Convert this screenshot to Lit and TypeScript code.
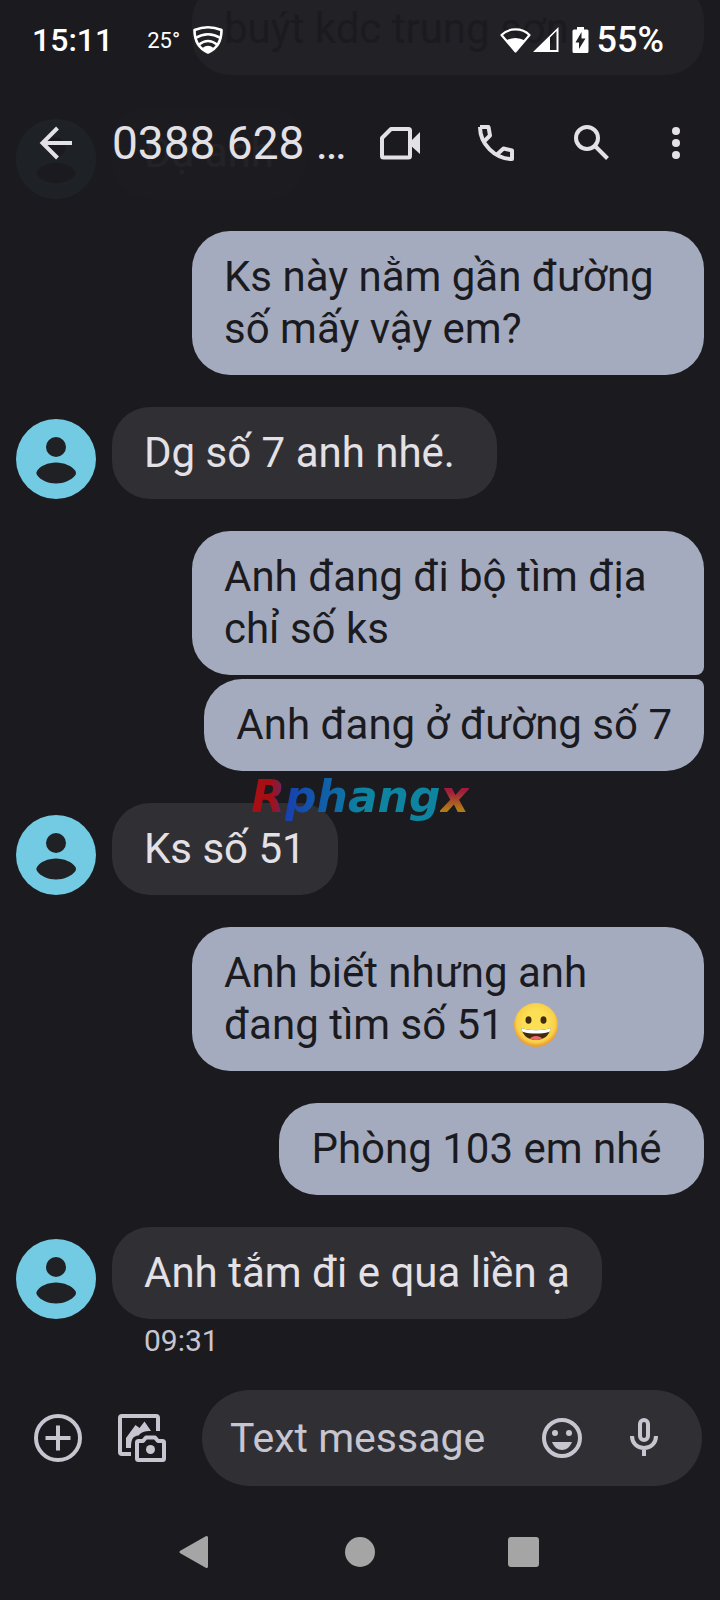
import { LitElement, html, svg, css, nothing } from "lit";
import { customElement, property } from "lit/decorators.js";

type Message = {
  from: "me" | "them";
  text: string;
  emoji?: boolean;
  joinNext?: boolean;
  joinPrev?: boolean;
  wide?: boolean;
  time?: string;
};

const messages: Message[] = [
  { from: "me", text: "buýt kdc trung sơn", wide: true },
  { from: "them", text: "Dạ anh" },
  { from: "me", text: "Ks này nằm gần đường số mấy vậy em?" },
  { from: "them", text: "Dg số 7 anh nhé.\u00a0" },
  { from: "me", text: "Anh đang đi bộ tìm địa chỉ số ks", joinNext: true },
  { from: "me", text: "Anh đang ở đường số 7", joinPrev: true },
  { from: "them", text: "Ks số 51" },
  { from: "me", text: "Anh biết nhưng anh đang tìm số 51 ", emoji: true },
  { from: "me", text: "Phòng 103 em nhé\u00a0" },
  { from: "them", text: "Anh tắm đi e qua liền ạ", time: "09:31" },
];

const grin = html`<svg class="emoji" viewBox="0 0 44 44" role="img" aria-label="Grinning face">
  <defs>
    <radialGradient id="face" cx="50%" cy="45%" r="52%">
      <stop offset="0.5" stop-color="#fbe055" />
      <stop offset="0.85" stop-color="#f9d04a" />
      <stop offset="1" stop-color="#efa030" />
    </radialGradient>
  </defs>
  <circle cx="22" cy="22" r="22" fill="url(#face)" />
  <ellipse cx="14.5" cy="17" rx="3" ry="3.8" fill="#422b0d" />
  <ellipse cx="29.5" cy="17" rx="3" ry="3.8" fill="#422b0d" />
  <path d="M7.500 25C16 28 28 28 36.500 25C36 32 30 37 22 37S8 32 7.500 25z" fill="#422b0d" />
  <path d="M7.500 25C16 28 28 28 36.500 25C36.500 27 36 28.500 35 29C27 31 17 31 9 29C8 28.500 7.500 27 7.500 25z" fill="#fff" />
  <path d="M16 35.500C18 32 26 32 28 35.500C24 37.500 20 37.500 16 35.500z" fill="#ee6a6a" />
</svg>`;

const icons = {
  shield: svg`<g fill="none" stroke="currentColor" stroke-width="2.6">
    <path stroke-linejoin="round" d="M2.500 6Q16 .5 29.500 6C29.500 18 24 25 16 28.500C8 25 2.500 18 2.500 6z"/>
    <path d="M3.500 14Q16 6.500 28.500 14M7 20.500Q16 13.500 25 20.500"/></g>
    <path fill="currentColor" d="M10.500 24Q16 19.500 21.500 24L16 29z"/>`,
  wifi: svg`<path fill="none" stroke="currentColor" stroke-width="2.2" stroke-linejoin="round" d="M2.500 9C10 1.500 23 1.500 30.500 9L16.500 25.500z"/>
    <path fill="currentColor" d="M7 14.500Q16.500 9.500 26 14.500L16.500 26z"/>`,
  signal: svg`<path fill="currentColor" fill-rule="evenodd" d="M0 26L25.500 1V26zM17 11.500V24H23.500V5z"/>`,
  battery: svg`<path fill="currentColor" fill-rule="evenodd" d="M5 1H12V3.500H15Q16.500 3.500 16.500 5V25.500Q16.500 27 15 27H2Q.5 27 .5 25.500V5Q.5 3.500 2 3.500H5zM9.500 6L3.500 16.500H7V23L13.500 12.500H9.500z"/>`,
  back: svg`<path fill="none" stroke="currentColor" stroke-width="4" d="M40 24H11M25.500 9L10.500 24L25.500 39"/>`,
  video: svg`<path fill="none" stroke="currentColor" stroke-width="4" stroke-linejoin="round" d="M15 10H32.500Q34 10 34 11.500V37Q34 38.500 32.500 38.500H7.500Q6 38.500 6 37V19z"/>
    <path fill="currentColor" d="M34 23L44 13V35L34 26z"/>`,
  call: svg`<path fill="none" stroke="currentColor" stroke-width="4" stroke-linejoin="round" d="M8 8H16.500L18 16.500L12.500 22M8 8C8 25 23 40 40 40V31.500L31.500 29.500L25.500 35"/>`,
  search: svg`<g fill="none" stroke="currentColor" stroke-width="4"><circle cx="19" cy="19" r="11"/><path d="M27 27L39.500 39.500"/></g>`,
  more: svg`<g fill="currentColor"><circle cx="24" cy="12" r="4"/><circle cx="24" cy="24" r="4"/><circle cx="24" cy="36" r="4"/></g>`,
  add: svg`<g fill="none" stroke="currentColor" stroke-width="4"><circle cx="24" cy="24" r="22"/><path d="M24 11.500V36.500M11.500 24H36.500"/></g>`,
  gallery: svg`<g fill="none" stroke="currentColor" stroke-width="4">
    <path d="M40 17V4Q40 2 38 2H4Q2 2 2 4V38Q2 40 4 40H13"/>
    <path stroke-linejoin="round" d="M19 28.500Q19 27 20.500 27H25L28 23.500H37L40 27H44.500Q46 27 46 28.500V44.500Q46 46 44.500 46H20.500Q19 46 19 44.500z"/></g>
    <path fill="currentColor" d="M8 34V24L17.500 11L21.500 14L26.500 7.500L33 17C26 17 24 18 20.500 21.500C15 22 13 25 13 34z"/>
    <circle fill="currentColor" cx="32.500" cy="35.500" r="4.500"/>`,
  smile: svg`<circle cx="24" cy="24" r="18" fill="none" stroke="currentColor" stroke-width="4"/>
    <g fill="currentColor"><circle cx="17" cy="19" r="3"/><circle cx="31" cy="19" r="3"/><path d="M14 28H34C32 33 28.500 36 24 36S16 33 14 28z"/></g>`,
  mic: svg`<g fill="none" stroke="currentColor" stroke-width="4"><rect x="20" y="6" width="8" height="20" rx="4"/><path d="M12 22C12 29 17 34 24 34S36 29 36 22M24 34V42"/></g>`,
  navBack: svg`<path fill="currentColor" stroke="currentColor" stroke-width="3" stroke-linejoin="round" d="M9 24L34.500 9.500V38.500z"/>`,
  navHome: svg`<circle cx="24" cy="24" r="15" fill="currentColor"/>`,
  navRecent: svg`<rect x="8" y="9" width="31" height="30" rx="3" fill="currentColor"/>`,
};

@customElement("chat-message")
class ChatMessage extends LitElement {
  @property({ attribute: false }) message!: Message;

  static styles = css`
    :host {
      display: block;
    }
    .row {
      display: flex;
      align-items: flex-end;
      gap: 16px;
    }
    .me {
      justify-content: flex-end;
      padding-left: 176px;
    }
    .avatar {
      flex: none;
      width: 80px;
      height: 80px;
    }
    .bubble {
      margin: 0;
      padding: 20px 32px;
      border-radius: 38px;
      background: #303034;
      color: #e4e1e6;
      font-size: 42px;
      line-height: 52px;
    }
    .me .bubble {
      background: #a5abbf;
      color: #1b1b1f;
    }
    .wide {
      flex: 1;
    }
    .me .join-next {
      border-bottom-right-radius: 8px;
    }
    .me .join-prev {
      border-top-right-radius: 8px;
    }
    .time {
      display: block;
      padding-left: 128px;
      color: #c7c5d0;
      font-size: 30px;
      line-height: 44px;
    }
    .emoji {
      width: 44px;
      height: 44px;
      margin: -8px 0;
      vertical-align: 0;
    }
  `;

  render() {
    const m = this.message;
    const shape = `bubble ${m.wide ? "wide" : ""} ${m.joinNext ? "join-next" : ""} ${m.joinPrev ? "join-prev" : ""}`;
    return html`
      <div class="row ${m.from}">
        ${m.from === "them"
          ? html`<svg class="avatar" viewBox="0 0 80 80" aria-hidden="true">
              <circle cx="40" cy="40" r="40" fill="#73cae3" />
              <circle cx="40" cy="28" r="10" fill="#202124" />
              <path d="M21 52C24 47 32 43.500 40 43.500S56 47 59.500 52Q60.500 54 59.500 56C55 61.500 48 64.500 40 64.500S25 61.500 21 56Q19.500 54 21 52z" fill="#202124" />
            </svg>`
          : nothing}
        <p class=${shape}>${m.text}${m.emoji ? grin : nothing}</p>
      </div>
      ${m.time ? html`<time class="time">${m.time}</time>` : nothing}
    `;
  }
}

@customElement("app-root")
class AppRoot extends LitElement {
  static styles = css`
    :host {
      display: block;
      font-family: Roboto, "Noto Sans", sans-serif;
    }
    .screen {
      position: relative;
      display: flex;
      flex-direction: column;
      height: 100vh;
      overflow: hidden;
      background: #1b1b1f;
      color: #e4e1e6;
    }
    .top {
      position: absolute;
      inset: 0 0 auto 0;
      background: rgba(27, 27, 31, 0.96);
    }
    .status {
      display: flex;
      align-items: center;
      height: 80px;
      padding: 0 56px 0 32px;
      color: #fff;
      font-size: 36px;
      font-weight: 500;
    }
    .clock {
      font-size: 32px;
    }
    .weather {
      margin: 0 12px 0 34px;
      font-size: 22px;
      font-weight: 400;
    }
    .system {
      display: flex;
      align-items: center;
      margin-left: auto;
    }
    .shield {
      width: 32px;
      height: 32px;
    }
    .wifi {
      width: 34px;
      height: 28px;
    }
    .signal {
      width: 26px;
      height: 28px;
      margin-right: 13px;
    }
    .battery {
      width: 17px;
      height: 28px;
      margin-right: 8px;
    }
    .bar {
      display: flex;
      align-items: center;
      height: 126px;
      padding: 0 8px 0 32px;
    }
    .title {
      flex: 1;
      margin: 0 0 0 32px;
      font-size: 46px;
      font-weight: 400;
      white-space: nowrap;
    }
    button {
      display: grid;
      place-items: center;
      flex: none;
      height: 48px;
      padding: 0;
      border: 0;
      background: none;
      color: inherit;
    }
    .icon {
      display: block;
      width: 48px;
      height: 48px;
    }
    .w48 {
      width: 48px;
    }
    .w72 {
      width: 72px;
    }
    .w80 {
      width: 80px;
    }
    .w84 {
      width: 84px;
    }
    .w96 {
      width: 96px;
    }
    .w164 {
      width: 164px;
    }
    .messages {
      flex: 1;
      min-height: 0;
      display: flex;
      flex-direction: column;
      justify-content: flex-end;
      gap: 32px;
      padding: 0 16px 11px;
      overflow: hidden;
    }
    .message {
      flex: none;
    }
    .joined {
      margin-top: -28px;
    }
    .composer {
      display: flex;
      align-items: center;
      gap: 36px;
      padding: 16px 18px 18px 34px;
      color: #c7c5d0;
    }
    .field {
      flex: 1;
      min-width: 0;
      display: flex;
      align-items: center;
      height: 96px;
      padding: 0 16px 0 28px;
      border-radius: 48px;
      background: #303034;
    }
    .input {
      flex: 1;
      min-width: 0;
      padding: 0;
      border: 0;
      outline: 0;
      background: none;
      color: #e4e1e6;
      font: inherit;
      font-size: 41px;
    }
    .input::placeholder {
      color: #c7c5d0;
      opacity: 1;
    }
    .nav {
      display: flex;
      align-items: center;
      justify-content: center;
      height: 96px;
      color: #a5a5a5;
    }
    .watermark {
      position: absolute;
      inset: 0;
      display: flex;
      align-items: center;
      justify-content: center;
      padding-bottom: 8px;
      pointer-events: none;
      font: italic 700 44px "DejaVu Sans", sans-serif;
    }
    .ink {
      color: transparent;
      background-clip: text;
      -webkit-background-clip: text;
    }
    .ink-r {
      background-image: linear-gradient(90deg, #a80f14 60%, #5a2a70);
    }
    .ink-phang {
      background-image: linear-gradient(90deg, #183fae, #0f62a8 28%, #0e84a0 50%);
    }
    .ink-x {
      background-image: linear-gradient(180deg, #a01c3c 40%, #b07a18 75%);
    }
  `;

  private button(name: keyof typeof icons, label: string, width: string) {
    return html`<button class=${width} type="button" aria-label=${label}>
      <svg class="icon" viewBox="0 0 48 48">${icons[name]}</svg>
    </button>`;
  }

  render() {
    return html`
      <div class="screen">
        <main class="messages">
          ${messages.map((m) => html`<chat-message class="message ${m.joinPrev ? "joined" : ""}" .message=${m}></chat-message>`)}
        </main>
        <form class="composer" @submit=${(e: Event) => e.preventDefault()}>
          ${this.button("add", "Add attachment", "w48")} ${this.button("gallery", "Gallery and camera", "w48")}
          <div class="field">
            <input class="input" type="text" placeholder="Text message" aria-label="Text message" />
            ${this.button("smile", "Emoji", "w80")} ${this.button("mic", "Record voice message", "w84")}
          </div>
        </form>
        <nav class="nav">
          ${this.button("navBack", "Back", "w164")} ${this.button("navHome", "Home", "w164")}
          ${this.button("navRecent", "Recent apps", "w164")}
        </nav>
        <header class="top">
          <div class="status">
            <span class="clock">15:11</span>
            <span class="weather">25°</span>
            <svg class="shield" viewBox="0 0 32 32" aria-hidden="true">${icons.shield}</svg>
            <div class="system">
              <svg class="wifi" viewBox="0 0 34 28" aria-hidden="true">${icons.wifi}</svg>
              <svg class="signal" viewBox="0 0 26 28" aria-hidden="true">${icons.signal}</svg>
              <svg class="battery" viewBox="0 0 17 28" aria-hidden="true">${icons.battery}</svg>
              <span>55%</span>
            </div>
          </div>
          <div class="bar">
            ${this.button("back", "Back", "w48")}
            <h1 class="title">0388 628 …</h1>
            ${this.button("video", "Video call", "w96")} ${this.button("call", "Call", "w96")}
            ${this.button("search", "Search", "w96")} ${this.button("more", "More options", "w72")}
          </div>
        </header>
        <div class="watermark" aria-hidden="true">
          <span class="ink ink-r">R</span><span class="ink ink-phang">phang</span><span class="ink ink-x">x</span>
        </div>
      </div>
    `;
  }
}
